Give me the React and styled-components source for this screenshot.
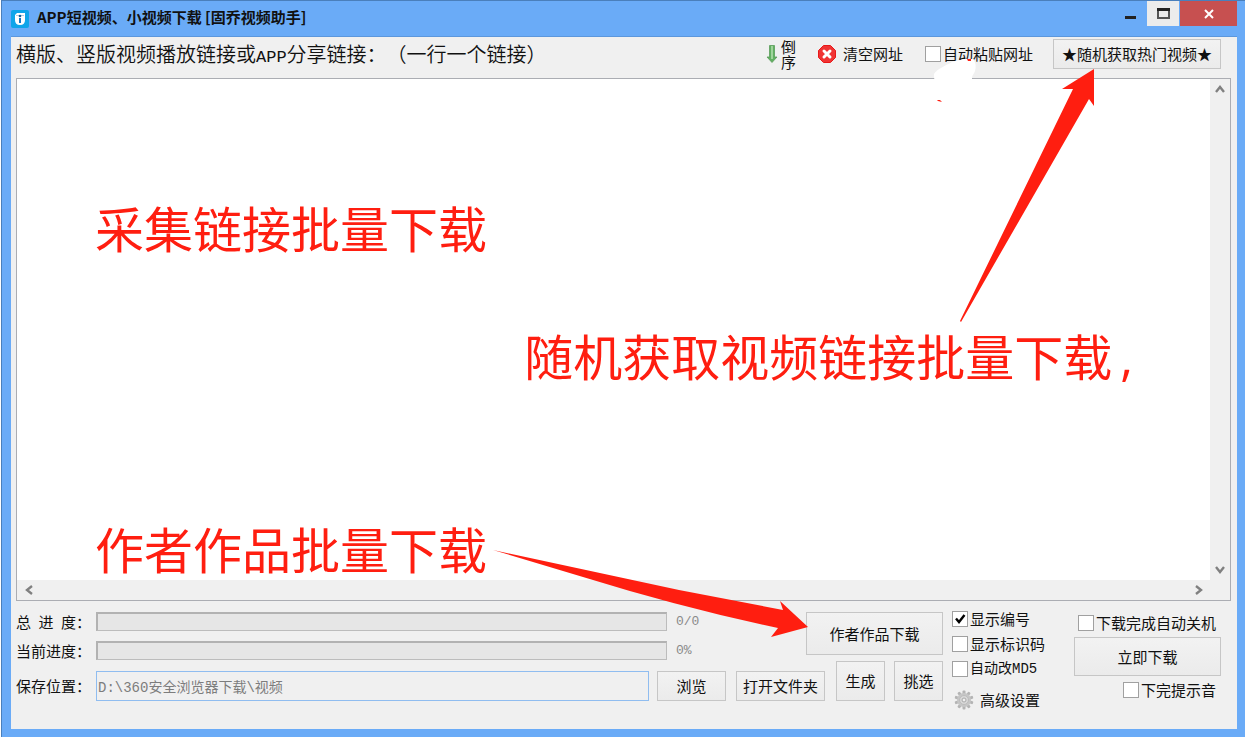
import React, { useState } from "react";
import styled, { createGlobalStyle } from "styled-components";

const App = () => {
  const [links, setLinks] = useState("");
  const [options, setOptions] = useState({
    paste: false,
    number: true,
    code: false,
    md5: false,
    shutdown: false,
    sound: false,
  });

  const toggle = (key) => {
    setOptions({ ...options, [key]: !options[key] });
  };

  const renderCheck = (key, label, mono) => (
    <CheckLabel $mono={mono}>
      <CheckBox
        type="checkbox"
        checked={options[key]}
        onChange={() => toggle(key)}
      />
      {label}
    </CheckLabel>
  );

  return (
    <Window>
      <GlobalStyle />
      <TitleBar>
        <LogoIcon />
        <Title>APP短视频、小视频下载 [固乔视频助手]</Title>
        <MinBtn aria-label="最小化">
          <svg width="11" height="4">
            <rect width="11" height="3" y="1" fill="#222" />
          </svg>
        </MinBtn>
        <MaxBtn aria-label="最大化">
          <svg width="13" height="11">
            <path d="M1 1h11v9H1z" fill="none" stroke="#555" strokeWidth="2" />
            <path d="M0 0h13v3H0z" fill="#222" />
          </svg>
        </MaxBtn>
        <CloseBtn aria-label="关闭">
          <svg width="10" height="10">
            <path d="M1 1l8 8M9 1l-8 8" stroke="#fff" strokeWidth="2" />
          </svg>
        </CloseBtn>
      </TitleBar>

      <Client>
        <Toolbar>
          <Heading htmlFor="links">
            横版、竖版视频播放链接或<Latin>APP</Latin>分享链接：（一行一个链接）
          </Heading>
          <ReverseBtn>
            <DownArrow />
            <Stacked>倒序</Stacked>
          </ReverseBtn>
          <ClearBtn onClick={() => setLinks("")}>
            <ClearIcon />
            清空网址
          </ClearBtn>
          {renderCheck("paste", "自动粘贴网址")}
          <HotBtn>★随机获取热门视频★</HotBtn>
          <Smudge viewBox="0 0 46 46">
            <path
              d="M1 16C4 11 12 8 19 4C22 2 27 3 30 1L40 1Q44 6 42 13C41 16 39 17 39 21L39 24L4 24Q0 21 1 16Z"
              fill="#fff"
            />
            <path d="M34 1h4v2h-3zM4 42l3 0 2 2-4-1z" fill="#ff1e10" />
          </Smudge>
        </Toolbar>

        <Editor>
          <LinkArea
            id="links"
            value={links}
            onChange={(e) => setLinks(e.target.value)}
          />
          <VerticalBar>
            <ScrollBtn aria-label="向上">
              <Chevron d="M1 8L5 3L9 8" />
            </ScrollBtn>
            <ScrollBtn aria-label="向下">
              <Chevron d="M1 2L5 7L9 2" />
            </ScrollBtn>
          </VerticalBar>
          <HorizontalBar>
            <ScrollBtn aria-label="向左">
              <Chevron d="M8 1L3 5L8 9" />
            </ScrollBtn>
            <ScrollBtn aria-label="向右">
              <Chevron d="M2 1L7 5L2 9" />
            </ScrollBtn>
          </HorizontalBar>
          <CollectNote>采集链接批量下载</CollectNote>
          <RandomNote>
            随机获取视频链接批量下载<Comma>,</Comma>
          </RandomNote>
          <AuthorNote>作者作品批量下载</AuthorNote>
        </Editor>

        <Footer>
          <Main>
            <ProgressArea>
              <ProgressList>
                <Field>
                  <FieldName>总 进 度</FieldName>：
                </Field>
                <Track role="progressbar" aria-label="总进度" />
                <Value>0/0</Value>
                <Field>
                  <FieldName>当前进度</FieldName>：
                </Field>
                <Track role="progressbar" aria-label="当前进度" />
                <Value>0%</Value>
              </ProgressList>
              <AuthorBtn>作者作品下载</AuthorBtn>
            </ProgressArea>
            <SaveRow>
              <SaveField as="label" htmlFor="path">
                <FieldName>保存位置</FieldName>：
              </SaveField>
              <PathInput
                id="path"
                readOnly
                value={"D:\\360安全浏览器下载\\视频"}
              />
              <BrowseBtn>浏览</BrowseBtn>
              <FolderBtn>打开文件夹</FolderBtn>
              <TallBtn>生成</TallBtn>
              <TallBtn>挑选</TallBtn>
            </SaveRow>
          </Main>
          <OptionList>
            {renderCheck("number", "显示编号")}
            {renderCheck("code", "显示标识码")}
            {renderCheck("md5", "自动改MD5", true)}
            <SettingBtn>
              <GearIcon />
              高级设置
            </SettingBtn>
          </OptionList>
          <StartArea>
            {renderCheck("shutdown", "下载完成自动关机")}
            <StartBtn>立即下载</StartBtn>
            {renderCheck("sound", "下完提示音")}
          </StartArea>
        </Footer>
      </Client>

      <HotArrow viewBox="0 0 140 256">
        <path
          d="M6 253L5 252L118 20H107L139 0V37L134 30Z"
          fill="#ff1e10"
        />
      </HotArrow>
      <AuthorArrow viewBox="0 0 316 90">
        <path
          d="M0 0L186 40L290 60L287 51L315 77L278 87L285 78Q190 58 90 27Z"
          fill="#ff1e10"
        />
      </AuthorArrow>
    </Window>
  );
};

const LogoIcon = () => (
  <svg width="18" height="18" viewBox="0 0 18 18">
    <rect width="18" height="18" rx="2" fill="#0fa5ea" />
    <path d="M6 3h8v7q0 5-5 5t-5-5V5z" fill="#fff" />
    <path d="M5 5h8v1H5z" fill="#b5cfe0" />
    <circle cx="9" cy="6" r="1.300" fill="#1c5f9c" />
    <path d="M8 8h2v5H8z" fill="#1478c4" />
  </svg>
);

const DownArrow = () => (
  <svg width="12" height="20" viewBox="0 0 12 20">
    <path
      d="M3.500 1.500h5V13H11L6 18.500 1 13h2.500z"
      fill="#62b062"
      stroke="#5a9c5a"
      strokeWidth="0.800"
    />
    <path d="M5 2h2v13H5z" fill="#a0d49c" />
  </svg>
);

const ClearIcon = () => (
  <svg width="18" height="18" viewBox="0 0 18 18">
    <path
      d="M5.500 0.500h7L17.500 5.500v7L12.500 17.500h-7L0.500 12.500v-7z"
      fill="#f03434"
      stroke="#e81818"
    />
    <path
      d="M6 6l6 6M12 6l-6 6"
      stroke="#fff"
      strokeWidth="3"
      strokeLinecap="round"
    />
  </svg>
);

const GearIcon = () => (
  <svg width="20" height="20" viewBox="0 0 20 20">
    {[0, 36, 72, 108, 144].map((angle) => (
      <rect
        key={angle}
        x="8.500"
        y="0.500"
        width="3"
        height="19"
        rx="1"
        fill="#b4b4b4"
        transform={`rotate(${angle} 10 10)`}
      />
    ))}
    <circle cx="10" cy="10" r="7" fill="#c6c6c6" />
    <circle cx="10" cy="10" r="4.500" fill="#d8d8d8" stroke="#bcbcbc" />
    <circle cx="10" cy="10" r="2" fill="#f0f0f0" stroke="#a8a8a8" />
  </svg>
);

const Chevron = ({ d }) => (
  <svg width="10" height="10" viewBox="0 0 10 10">
    <path d={d} fill="none" stroke="#808080" strokeWidth="2.400" />
  </svg>
);

const GlobalStyle = createGlobalStyle`
  * {
    box-sizing: border-box;
  }
  body {
    margin: 0;
    font-family: "Noto Sans CJK SC", sans-serif;
    font-size: 15px;
    line-height: 16px;
    color: #111;
  }
  button, input, textarea {
    font: inherit;
    color: inherit;
    margin: 0;
    padding: 0;
  }
  svg {
    display: block;
    flex: none;
  }
`;

const Window = styled.div`
  position: relative;
  display: flex;
  flex-direction: column;
  min-height: 100vh;
  margin-left: 1px;
  padding: 0 8px 8px 9px;
  background: #6aabf7;
  border-top: 1px solid #4a7fbb;
  border-left: 1px solid #4a7fbb;
`;

const TitleBar = styled.header`
  display: flex;
  align-items: center;
  height: 35px;
`;

const Title = styled.h1`
  flex: 1;
  margin: 0 0 0 8px;
  padding-bottom: 4px;
  font-size: 15px;
  font-weight: bold;
  line-height: 20px;
`;

const CaptionBtn = styled.button`
  display: flex;
  align-items: center;
  justify-content: center;
  align-self: flex-start;
  height: 25px;
  border: none;
`;

const MinBtn = styled(CaptionBtn)`
  width: 34px;
  padding-top: 6px;
  background: transparent;
`;

const MaxBtn = styled(CaptionBtn)`
  width: 32px;
  margin-right: 1px;
  background: #ececec;
`;

const CloseBtn = styled(CaptionBtn)`
  width: 57px;
  background: #c75050;
`;

const Client = styled.main`
  flex: 1;
  display: flex;
  flex-direction: column;
  padding: 0 6px 0 5px;
  background: #f0f0f0;
  border-top: 1px solid #5c97dc;
`;

const Toolbar = styled.div`
  position: relative;
  display: flex;
  align-items: center;
  height: 41px;
  padding: 0 10px 8px 0;
`;

const Heading = styled.label`
  flex: 1;
  padding-top: 4px;
  font-size: 20px;
  line-height: 24px;
  font-weight: 350;
  white-space: nowrap;
  text-spacing-trim: space-all;
`;

const Latin = styled.span`
  font-family: "Liberation Mono", monospace;
  font-size: 17px;
  font-weight: 400;
`;

const FlatBtn = styled.button`
  display: flex;
  align-items: center;
  background: transparent;
  border: none;
`;

const ReverseBtn = styled(FlatBtn)`
  gap: 3px;
  margin-right: 22px;
`;

const Stacked = styled.span`
  width: 15px;
  line-height: 15px;
`;

const ClearBtn = styled(FlatBtn)`
  gap: 7px;
  margin-right: 22px;
`;

const CheckLabel = styled.label`
  display: flex;
  align-items: center;
  gap: 2px;
  height: 16px;
  white-space: nowrap;
  font-family: ${(props) =>
    props.$mono
      ? '"Liberation Mono", "Noto Sans CJK SC", monospace'
      : '"Noto Sans CJK SC", sans-serif'};
  font-size: ${(props) => (props.$mono ? "14px" : "15px")};
`;

const CheckBox = styled.input`
  appearance: none;
  flex: none;
  width: 16px;
  height: 16px;
  border: 1px solid #a0a0a0;
  background: #fff;
  &:checked {
    background: #fff
      url('data:image/svg+xml,<svg xmlns="http://www.w3.org/2000/svg" width="14" height="14"><path d="M3 6.500L6 10L11.500 3" fill="none" stroke="black" stroke-width="2.400"/></svg>');
  }
`;

const PushBtn = styled.button`
  flex: none;
  background: linear-gradient(#f2f2f2, #ebebeb);
  border: 1px solid #c6c6c6;
  white-space: nowrap;
  cursor: pointer;
  &:hover {
    border-color: #7eb4ea;
  }
`;

const HotBtn = styled(PushBtn)`
  width: 168px;
  height: 30px;
  margin-left: 20px;
`;

const Smudge = styled.svg`
  position: absolute;
  right: 252px;
  top: 21px;
  width: 46px;
  height: 46px;
  z-index: 1;
`;

const Editor = styled.section`
  position: relative;
  flex: 1;
  display: grid;
  grid-template-columns: 1fr 20px;
  grid-template-rows: 1fr 20px;
  min-height: 300px;
  border: 1px solid #abadb3;
  background: #fff;
`;

const LinkArea = styled.textarea`
  padding: 4px;
  border: none;
  outline: none;
  resize: none;
  background: #fff;
`;

const VerticalBar = styled.div`
  display: flex;
  flex-direction: column;
  justify-content: space-between;
  background: #f0f0f0;
`;

const HorizontalBar = styled.div`
  grid-column: 1 / 3;
  display: flex;
  justify-content: space-between;
  padding: 0 22px 2px 2px;
  background: #f0f0f0;
`;

const ScrollBtn = styled.button`
  display: flex;
  align-items: center;
  justify-content: center;
  width: 19px;
  height: 20px;
  border: none;
  background: transparent;
`;

const Note = styled.p`
  position: absolute;
  margin: 0;
  font-size: 49px;
  line-height: 60px;
  color: #ff1e10;
  white-space: nowrap;
  pointer-events: none;
`;

const CollectNote = styled(Note)`
  left: 78px;
  top: 118px;
`;

const RandomNote = styled(Note)`
  right: 97px;
  top: 246px;
`;

const AuthorNote = styled(Note)`
  left: 78px;
  top: 439px;
`;

const Comma = styled.span`
  margin-left: 8px;
  font-family: "Open Sans", sans-serif;
`;

const Footer = styled.footer`
  display: flex;
  padding: 10px 10px 19px 0;
`;

const Main = styled.div`
  flex: 1;
  padding-top: 1px;
`;

const ProgressArea = styled.div`
  display: flex;
  align-items: flex-start;
  height: 49px;
`;

const ProgressList = styled.div`
  flex: 1;
  display: grid;
  grid-template-columns: 80px 1fr 139px;
  row-gap: 10px;
  align-items: center;
`;

const Field = styled.div`
  display: flex;
  width: 80px;
  white-space: nowrap;
`;

const FieldName = styled.span`
  width: 60px;
  text-align-last: justify;
`;

const Track = styled.div`
  height: 19px;
  background: #e6e6e6;
  border: 1px solid #bcbcbc;
  border-top: 2px solid #b2b2b2;
  border-left: 2px solid #b2b2b2;
`;

const Value = styled.span`
  padding-left: 9px;
  font-family: "Liberation Mono", monospace;
  font-size: 13px;
  color: #8a8a8a;
`;

const AuthorBtn = styled(PushBtn)`
  width: 137px;
  height: 43px;
`;

const SaveRow = styled.div`
  display: flex;
  align-items: flex-end;
`;

const SaveField = styled(Field)`
  align-items: center;
  height: 30px;
`;

const PathInput = styled.input`
  flex: 1;
  min-width: 0;
  height: 30px;
  padding: 0 1px;
  font-family: "Liberation Mono", "Noto Sans CJK SC", monospace;
  font-size: 14px;
  color: #7d7d7d;
  background: #f0f0f0;
  border: 1px solid #90bdf0;
  outline: none;
`;

const BrowseBtn = styled(PushBtn)`
  width: 69px;
  height: 30px;
  margin: 0 10px 0 8px;
`;

const FolderBtn = styled(PushBtn)`
  width: 89px;
  height: 30px;
  margin-right: 2px;
`;

const TallBtn = styled(PushBtn)`
  width: 49px;
  height: 40px;
  margin-left: 9px;
`;

const OptionList = styled.div`
  display: flex;
  flex-direction: column;
  align-items: flex-start;
  gap: 9px;
  width: 131px;
  padding-left: 9px;
`;

const SettingBtn = styled(FlatBtn)`
  gap: 6px;
  margin: 4px 0 0 2px;
`;

const StartArea = styled.div`
  display: flex;
  flex-direction: column;
  align-items: flex-end;
  gap: 6px;
  width: 147px;
  padding-top: 4px;
  & > label {
    margin-right: 5px;
  }
`;

const StartBtn = styled(PushBtn)`
  width: 100%;
  height: 39px;
`;

const Arrow = styled.svg`
  position: absolute;
  pointer-events: none;
`;

const HotArrow = styled(Arrow)`
  right: 150px;
  top: 68px;
  width: 140px;
  height: 256px;
`;

const AuthorArrow = styled(Arrow)`
  right: 436px;
  top: 549px;
  width: 316px;
  height: 90px;
`;

export default App;
